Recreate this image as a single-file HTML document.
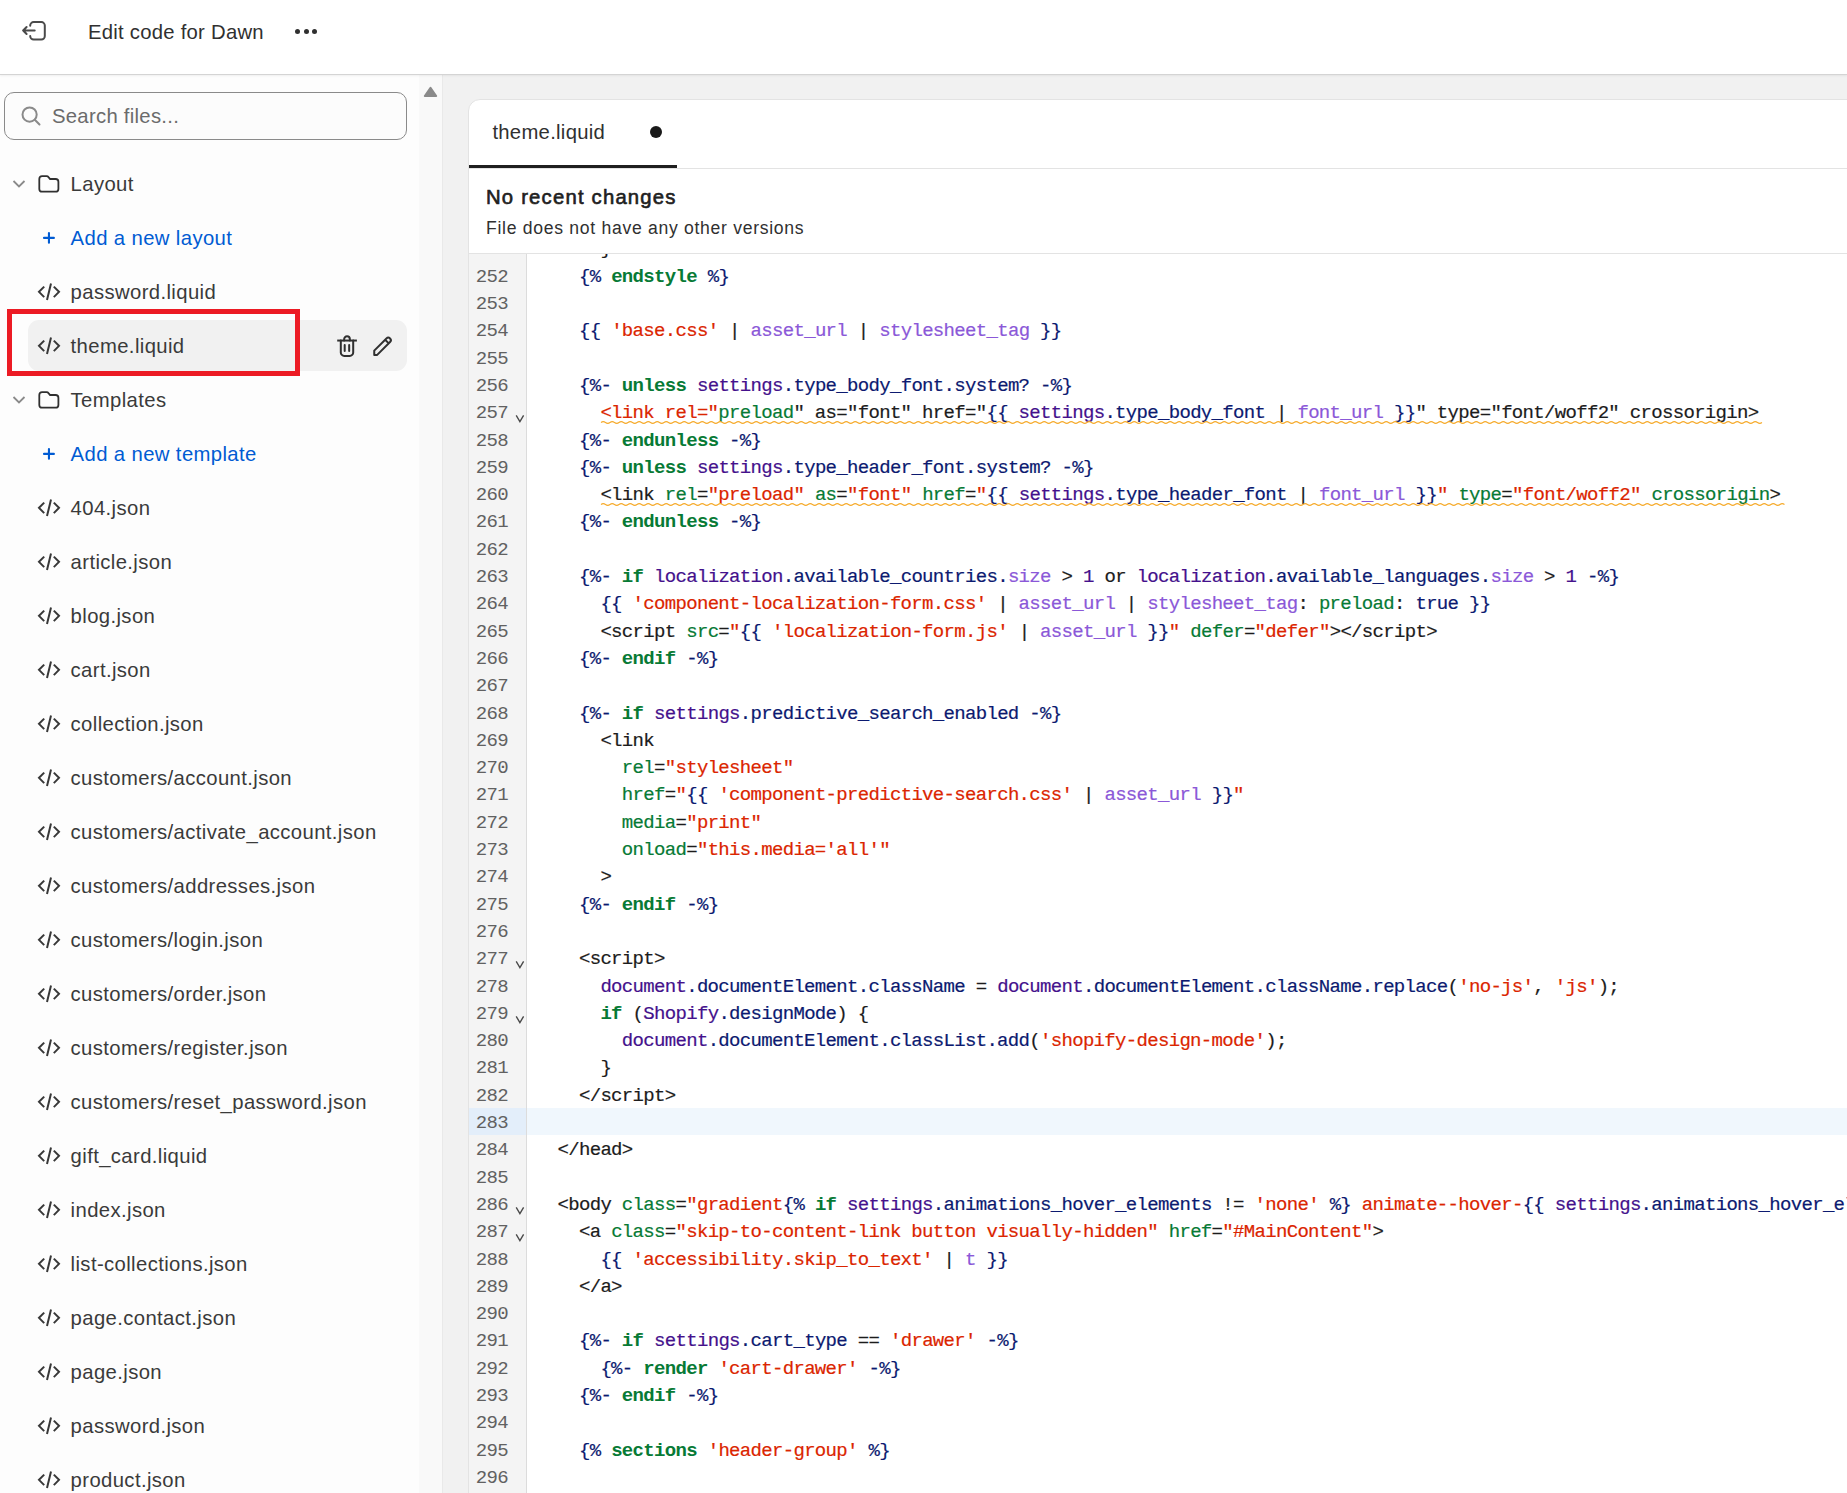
<!DOCTYPE html>
<html><head><meta charset="utf-8"><title>Edit code for Dawn</title>
<style>
*{box-sizing:border-box;margin:0;padding:0}
html,body{width:1847px;height:1493px;overflow:hidden;background:#f1f1f1;font-family:"Liberation Sans",sans-serif;color:#303030}
i,b{font-style:normal;font-weight:normal}
#header{position:absolute;left:0;top:0;width:1847px;height:75px;background:#ffffff;border-bottom:1px solid #d4d4d4;box-shadow:0 1px 2px rgba(0,0,0,.06);z-index:3}
.exit{position:absolute;left:20px;top:19px}
.title{position:absolute;left:88px;top:20px;font-size:20.3px;line-height:24px;letter-spacing:0.25px;white-space:nowrap;color:#303030}
.dots{position:absolute;left:295px;top:29.2px;width:23px;height:6px}
.dots i{position:absolute;top:0;width:5.2px;height:5.2px;border-radius:50%;background:#303030}
.dots i:nth-child(1){left:0}.dots i:nth-child(2){left:8.5px}.dots i:nth-child(3){left:17px}
#side{position:absolute;left:0;top:74px;width:419px;height:1419px;background:#fdfdfd;overflow:hidden}
.search{position:absolute;left:4px;top:18px;width:403px;height:48px;border:1px solid #8a8a8a;border-radius:10px;background:#fcfcfc}
.sicon{position:absolute;left:15px;top:11.5px}
.search span{position:absolute;left:47px;top:11px;font-size:20.3px;line-height:24px;letter-spacing:0.28px;color:#6b6b6b;white-space:nowrap}
.row{position:absolute;left:0;width:419px;height:54px}
.row .lbl{position:absolute;left:70.6px;top:0;line-height:54px;font-size:20.3px;letter-spacing:0.38px;white-space:nowrap;color:#3a3a3a}
.row .lbl.add{color:#005bd3}
.ci{position:absolute;left:37px;top:17px}
.fi{position:absolute;left:37px;top:17px}
.chev{position:absolute;left:12px;top:22px}
.plus{position:absolute;left:42px;top:20px}
.selbg{position:absolute;left:28px;top:1px;width:379px;height:51px;border-radius:11px;background:#f1f1f1}
.trash{position:absolute;left:336px;top:14.5px}
.pencil{position:absolute;left:372px;top:16px}
.redbox{position:absolute;left:7px;top:235px;width:293px;height:67px;border:5px solid #ec1b24}
#track{position:absolute;left:419px;top:74px;width:23px;height:1419px;background:#f9f9f9}
.tri{position:absolute;left:3px;top:10px}
#main{position:absolute;left:442px;top:74px;width:1405px;height:1419px;background:#f1f1f1;border-left:1px solid #e9e9e9}
#card{position:absolute;left:25px;top:25px;width:1420px;height:1450px;background:#ffffff;border:1px solid #e3e3e3;border-radius:12px 0 0 0;overflow:hidden}
.tabs{position:absolute;left:0;top:0;width:100%;height:69px;border-bottom:1px solid #e3e3e3}
.tab{position:absolute;left:0;top:0;width:208px;height:68px;border-bottom:3px solid #1f1f1f;font-size:20.3px;color:#303030}
.tab{padding-left:23.4px;line-height:24px;padding-top:20px;letter-spacing:0.28px;white-space:nowrap}
.dot{position:absolute;left:181px;top:26px;width:12px;height:12px;border-radius:50%;background:#1a1a1a}
.info{position:absolute;left:0;top:69px;width:100%;height:85px;border-bottom:1px solid #e3e3e3}
.info .h{position:absolute;left:17px;top:15.8px;letter-spacing:1.2px;font-size:20.3px;line-height:24px;font-weight:normal;-webkit-text-stroke:0.6px #202020;color:#202020;white-space:nowrap}
.info .p{position:absolute;left:17px;top:48px;font-size:17.6px;line-height:22px;letter-spacing:0.7px;color:#303030;white-space:nowrap}
.editor{position:absolute;left:0;top:154px;width:100%;height:1300px;overflow:hidden}
.gutter{position:absolute;left:0;top:0;width:58px;height:100%;background:#f4f4f4;border-right:1px solid #dcdcdc}
.gl,.cl{position:absolute;height:27.3px;line-height:27.3px;font-family:"Liberation Mono",monospace;font-size:19px;letter-spacing:-0.68px;white-space:pre;padding-top:2.1px}
.gl{left:0;width:57px;color:#616161}
.gl{padding-right:18px;text-align:right}
.gl.cur{background:#e3eefa}
.fold{position:absolute;left:46px;top:0;font-family:"Liberation Sans",sans-serif;font-size:14px;letter-spacing:0;color:#555}
.cl{left:58px;width:1400px;padding-left:30.5px;color:#1c1c1c;-webkit-text-stroke-width:0.2px}
.cl.cur{background:#f0f7fd}
.cl i.n{color:#0c1a70}
.cl i.k{color:#077a35;font-weight:bold;-webkit-text-stroke-width:0}
.cl i.v{color:#44118c}
.cl i.f{color:#8b58d8}
.cl i.s{color:#db2500}
.cl i.g{color:#077a35}
.cl i.d{color:#1c1c1c}
.fold{position:absolute;left:46px;top:16.3px}
.sq{position:absolute;top:21.6px;height:5px;overflow:visible}

</style></head>
<body>
<div id="header">
<svg class="exit" width="28" height="24" viewBox="0 0 28 24"><path d="M10.2 6.8 V6.6 A3.5 3.5 0 0 1 13.7 3.1 H21.3 A3.5 3.5 0 0 1 24.8 6.6 V17.1 A3.5 3.5 0 0 1 21.3 20.6 H13.7 A3.5 3.5 0 0 1 10.2 17.1 M14.7 11.5 H3.1 M6.6 8 L3.1 11.5 L6.6 15" fill="none" stroke="#4a4a4a" stroke-width="2" stroke-linecap="round" stroke-linejoin="round"/></svg>
<div class="title">Edit code for Dawn</div>
<div class="dots"><i></i><i></i><i></i></div>
</div>
<div id="side">
<div class="search"><svg class="sicon" width="24" height="24" viewBox="0 0 24 24"><circle cx="9.6" cy="9.6" r="7.1" fill="none" stroke="#8a8a8a" stroke-width="2"/><path d="M14.8 14.8 L19.5 19.5" stroke="#8a8a8a" stroke-width="2" stroke-linecap="round"/></svg><span>Search files...</span></div>
<div class="row" style="top:83px"><svg class="chev" width="14" height="10" viewBox="0 0 14 10"><path d="M1.5 2 L7 7.5 L12.5 2" fill="none" stroke="#8a8a8a" stroke-width="1.8"/></svg><svg class="fi" width="24" height="20" viewBox="0 0 24 20"><path d="M2.3 5 Q2.3 2.2 5.1 2.2 L9.6 2.2 Q10.8 2.2 11.5 3.1 L13.1 5 L18.6 5 Q21.4 5 21.4 7.8 L21.4 14.9 Q21.4 17.7 18.6 17.7 L5.1 17.7 Q2.3 17.7 2.3 14.9 Z" fill="none" stroke="#303030" stroke-width="1.8"/></svg><span class="lbl">Layout</span></div><div class="row" style="top:137px"><svg class="plus" width="14" height="14" viewBox="0 0 14 14"><path d="M6.95 2 V11.7 M2 6.9 H11.9" stroke="#005bd3" stroke-width="2.1" stroke-linecap="round"/></svg><span class="lbl add">Add a new layout</span></div><div class="row" style="top:191px"><svg class="ci" width="24" height="20" viewBox="0 0 24 20"><path d="M7.2 4.6 L2 9.85 L7.2 15.1 M10 18.1 L14 1.6 M16.8 4.6 L22 9.85 L16.8 15.1" fill="none" stroke="#383838" stroke-width="2"/></svg><span class="lbl">password.liquid</span></div><div class="row sel" style="top:245px"><div class="selbg"></div><svg class="ci" width="24" height="20" viewBox="0 0 24 20"><path d="M7.2 4.6 L2 9.85 L7.2 15.1 M10 18.1 L14 1.6 M16.8 4.6 L22 9.85 L16.8 15.1" fill="none" stroke="#383838" stroke-width="2"/></svg><span class="lbl">theme.liquid</span><svg class="trash" width="22" height="24" viewBox="0 0 22 24"><path d="M1.2 6.55 H20.9" stroke="#303030" stroke-width="2"/><path d="M8.15 6.5 V5.2 A2.86 2.86 0 0 1 13.87 5.2 V6.5 M4.8 6.6 V18.4 A3.5 3.5 0 0 0 8.3 21.9 H13.7 A3.5 3.5 0 0 0 17.2 18.4 V6.6 M8.7 11.05 V17 M13.17 11.05 V17" fill="none" stroke="#303030" stroke-width="2" stroke-linecap="round"/></svg><svg class="pencil" width="22" height="22" viewBox="0 0 22 22"><path d="M2.24 15.66 L14.45 3.45 A2.54 2.54 0 0 1 18.05 7.05 L5.2 19.9 L2.24 19.9 Z M13.15 4.75 L16.75 8.35" fill="none" stroke="#303030" stroke-width="2" stroke-linejoin="round"/></svg></div><div class="row" style="top:299px"><svg class="chev" width="14" height="10" viewBox="0 0 14 10"><path d="M1.5 2 L7 7.5 L12.5 2" fill="none" stroke="#8a8a8a" stroke-width="1.8"/></svg><svg class="fi" width="24" height="20" viewBox="0 0 24 20"><path d="M2.3 5 Q2.3 2.2 5.1 2.2 L9.6 2.2 Q10.8 2.2 11.5 3.1 L13.1 5 L18.6 5 Q21.4 5 21.4 7.8 L21.4 14.9 Q21.4 17.7 18.6 17.7 L5.1 17.7 Q2.3 17.7 2.3 14.9 Z" fill="none" stroke="#303030" stroke-width="1.8"/></svg><span class="lbl">Templates</span></div><div class="row" style="top:353px"><svg class="plus" width="14" height="14" viewBox="0 0 14 14"><path d="M6.95 2 V11.7 M2 6.9 H11.9" stroke="#005bd3" stroke-width="2.1" stroke-linecap="round"/></svg><span class="lbl add">Add a new template</span></div><div class="row" style="top:407px"><svg class="ci" width="24" height="20" viewBox="0 0 24 20"><path d="M7.2 4.6 L2 9.85 L7.2 15.1 M10 18.1 L14 1.6 M16.8 4.6 L22 9.85 L16.8 15.1" fill="none" stroke="#383838" stroke-width="2"/></svg><span class="lbl">404.json</span></div><div class="row" style="top:461px"><svg class="ci" width="24" height="20" viewBox="0 0 24 20"><path d="M7.2 4.6 L2 9.85 L7.2 15.1 M10 18.1 L14 1.6 M16.8 4.6 L22 9.85 L16.8 15.1" fill="none" stroke="#383838" stroke-width="2"/></svg><span class="lbl">article.json</span></div><div class="row" style="top:515px"><svg class="ci" width="24" height="20" viewBox="0 0 24 20"><path d="M7.2 4.6 L2 9.85 L7.2 15.1 M10 18.1 L14 1.6 M16.8 4.6 L22 9.85 L16.8 15.1" fill="none" stroke="#383838" stroke-width="2"/></svg><span class="lbl">blog.json</span></div><div class="row" style="top:569px"><svg class="ci" width="24" height="20" viewBox="0 0 24 20"><path d="M7.2 4.6 L2 9.85 L7.2 15.1 M10 18.1 L14 1.6 M16.8 4.6 L22 9.85 L16.8 15.1" fill="none" stroke="#383838" stroke-width="2"/></svg><span class="lbl">cart.json</span></div><div class="row" style="top:623px"><svg class="ci" width="24" height="20" viewBox="0 0 24 20"><path d="M7.2 4.6 L2 9.85 L7.2 15.1 M10 18.1 L14 1.6 M16.8 4.6 L22 9.85 L16.8 15.1" fill="none" stroke="#383838" stroke-width="2"/></svg><span class="lbl">collection.json</span></div><div class="row" style="top:677px"><svg class="ci" width="24" height="20" viewBox="0 0 24 20"><path d="M7.2 4.6 L2 9.85 L7.2 15.1 M10 18.1 L14 1.6 M16.8 4.6 L22 9.85 L16.8 15.1" fill="none" stroke="#383838" stroke-width="2"/></svg><span class="lbl">customers/account.json</span></div><div class="row" style="top:731px"><svg class="ci" width="24" height="20" viewBox="0 0 24 20"><path d="M7.2 4.6 L2 9.85 L7.2 15.1 M10 18.1 L14 1.6 M16.8 4.6 L22 9.85 L16.8 15.1" fill="none" stroke="#383838" stroke-width="2"/></svg><span class="lbl">customers/activate_account.json</span></div><div class="row" style="top:785px"><svg class="ci" width="24" height="20" viewBox="0 0 24 20"><path d="M7.2 4.6 L2 9.85 L7.2 15.1 M10 18.1 L14 1.6 M16.8 4.6 L22 9.85 L16.8 15.1" fill="none" stroke="#383838" stroke-width="2"/></svg><span class="lbl">customers/addresses.json</span></div><div class="row" style="top:839px"><svg class="ci" width="24" height="20" viewBox="0 0 24 20"><path d="M7.2 4.6 L2 9.85 L7.2 15.1 M10 18.1 L14 1.6 M16.8 4.6 L22 9.85 L16.8 15.1" fill="none" stroke="#383838" stroke-width="2"/></svg><span class="lbl">customers/login.json</span></div><div class="row" style="top:893px"><svg class="ci" width="24" height="20" viewBox="0 0 24 20"><path d="M7.2 4.6 L2 9.85 L7.2 15.1 M10 18.1 L14 1.6 M16.8 4.6 L22 9.85 L16.8 15.1" fill="none" stroke="#383838" stroke-width="2"/></svg><span class="lbl">customers/order.json</span></div><div class="row" style="top:947px"><svg class="ci" width="24" height="20" viewBox="0 0 24 20"><path d="M7.2 4.6 L2 9.85 L7.2 15.1 M10 18.1 L14 1.6 M16.8 4.6 L22 9.85 L16.8 15.1" fill="none" stroke="#383838" stroke-width="2"/></svg><span class="lbl">customers/register.json</span></div><div class="row" style="top:1001px"><svg class="ci" width="24" height="20" viewBox="0 0 24 20"><path d="M7.2 4.6 L2 9.85 L7.2 15.1 M10 18.1 L14 1.6 M16.8 4.6 L22 9.85 L16.8 15.1" fill="none" stroke="#383838" stroke-width="2"/></svg><span class="lbl">customers/reset_password.json</span></div><div class="row" style="top:1055px"><svg class="ci" width="24" height="20" viewBox="0 0 24 20"><path d="M7.2 4.6 L2 9.85 L7.2 15.1 M10 18.1 L14 1.6 M16.8 4.6 L22 9.85 L16.8 15.1" fill="none" stroke="#383838" stroke-width="2"/></svg><span class="lbl">gift_card.liquid</span></div><div class="row" style="top:1109px"><svg class="ci" width="24" height="20" viewBox="0 0 24 20"><path d="M7.2 4.6 L2 9.85 L7.2 15.1 M10 18.1 L14 1.6 M16.8 4.6 L22 9.85 L16.8 15.1" fill="none" stroke="#383838" stroke-width="2"/></svg><span class="lbl">index.json</span></div><div class="row" style="top:1163px"><svg class="ci" width="24" height="20" viewBox="0 0 24 20"><path d="M7.2 4.6 L2 9.85 L7.2 15.1 M10 18.1 L14 1.6 M16.8 4.6 L22 9.85 L16.8 15.1" fill="none" stroke="#383838" stroke-width="2"/></svg><span class="lbl">list-collections.json</span></div><div class="row" style="top:1217px"><svg class="ci" width="24" height="20" viewBox="0 0 24 20"><path d="M7.2 4.6 L2 9.85 L7.2 15.1 M10 18.1 L14 1.6 M16.8 4.6 L22 9.85 L16.8 15.1" fill="none" stroke="#383838" stroke-width="2"/></svg><span class="lbl">page.contact.json</span></div><div class="row" style="top:1271px"><svg class="ci" width="24" height="20" viewBox="0 0 24 20"><path d="M7.2 4.6 L2 9.85 L7.2 15.1 M10 18.1 L14 1.6 M16.8 4.6 L22 9.85 L16.8 15.1" fill="none" stroke="#383838" stroke-width="2"/></svg><span class="lbl">page.json</span></div><div class="row" style="top:1325px"><svg class="ci" width="24" height="20" viewBox="0 0 24 20"><path d="M7.2 4.6 L2 9.85 L7.2 15.1 M10 18.1 L14 1.6 M16.8 4.6 L22 9.85 L16.8 15.1" fill="none" stroke="#383838" stroke-width="2"/></svg><span class="lbl">password.json</span></div><div class="row" style="top:1379px"><svg class="ci" width="24" height="20" viewBox="0 0 24 20"><path d="M7.2 4.6 L2 9.85 L7.2 15.1 M10 18.1 L14 1.6 M16.8 4.6 L22 9.85 L16.8 15.1" fill="none" stroke="#383838" stroke-width="2"/></svg><span class="lbl">product.json</span></div>
<div class="redbox"></div>
</div>
<div id="track"><svg class="tri" width="18" height="14" viewBox="0 0 18 14"><path d="M2.8 12 L8.5 3.9 L14.2 12 Z" fill="#8a8a8a" stroke="#8a8a8a" stroke-width="2" stroke-linejoin="round"/></svg></div>
<div id="main">
<div id="card">
<div class="tabs"><div class="tab">theme.liquid<span class="dot"></span></div></div>
<div class="info"><div class="h">No recent changes</div><div class="p">File does not have any other versions</div></div>
<div class="editor">
<div class="gutter"><div class="gl" style="top:-19.65px"></div><div class="gl" style="top:7.65px">252</div><div class="gl" style="top:34.95px">253</div><div class="gl" style="top:62.25px">254</div><div class="gl" style="top:89.55px">255</div><div class="gl" style="top:116.85px">256</div><div class="gl" style="top:144.15px">257<svg class="fold" width="10" height="9" viewBox="0 0 10 9"><path d="M1.2 1.3 L4.9 7.6 L8.6 1.3" fill="none" stroke="#4a4a4a" stroke-width="1.35"/></svg></div><div class="gl" style="top:171.45px">258</div><div class="gl" style="top:198.75px">259</div><div class="gl" style="top:226.05px">260</div><div class="gl" style="top:253.35px">261</div><div class="gl" style="top:280.65px">262</div><div class="gl" style="top:307.95px">263</div><div class="gl" style="top:335.25px">264</div><div class="gl" style="top:362.55px">265</div><div class="gl" style="top:389.85px">266</div><div class="gl" style="top:417.15px">267</div><div class="gl" style="top:444.45px">268</div><div class="gl" style="top:471.75px">269</div><div class="gl" style="top:499.05px">270</div><div class="gl" style="top:526.35px">271</div><div class="gl" style="top:553.65px">272</div><div class="gl" style="top:580.95px">273</div><div class="gl" style="top:608.25px">274</div><div class="gl" style="top:635.55px">275</div><div class="gl" style="top:662.85px">276</div><div class="gl" style="top:690.15px">277<svg class="fold" width="10" height="9" viewBox="0 0 10 9"><path d="M1.2 1.3 L4.9 7.6 L8.6 1.3" fill="none" stroke="#4a4a4a" stroke-width="1.35"/></svg></div><div class="gl" style="top:717.45px">278</div><div class="gl" style="top:744.75px">279<svg class="fold" width="10" height="9" viewBox="0 0 10 9"><path d="M1.2 1.3 L4.9 7.6 L8.6 1.3" fill="none" stroke="#4a4a4a" stroke-width="1.35"/></svg></div><div class="gl" style="top:772.05px">280</div><div class="gl" style="top:799.35px">281</div><div class="gl" style="top:826.65px">282</div><div class="gl cur" style="top:853.95px">283</div><div class="gl" style="top:881.25px">284</div><div class="gl" style="top:908.55px">285</div><div class="gl" style="top:935.85px">286<svg class="fold" width="10" height="9" viewBox="0 0 10 9"><path d="M1.2 1.3 L4.9 7.6 L8.6 1.3" fill="none" stroke="#4a4a4a" stroke-width="1.35"/></svg></div><div class="gl" style="top:963.15px">287<svg class="fold" width="10" height="9" viewBox="0 0 10 9"><path d="M1.2 1.3 L4.9 7.6 L8.6 1.3" fill="none" stroke="#4a4a4a" stroke-width="1.35"/></svg></div><div class="gl" style="top:990.45px">288</div><div class="gl" style="top:1017.75px">289</div><div class="gl" style="top:1045.05px">290</div><div class="gl" style="top:1072.35px">291</div><div class="gl" style="top:1099.65px">292</div><div class="gl" style="top:1126.95px">293</div><div class="gl" style="top:1154.25px">294</div><div class="gl" style="top:1181.55px">295</div><div class="gl" style="top:1208.85px">296</div><div class="gl" style="top:1236.15px">297</div></div>
<div class="code"><div class="cl" style="top:-19.65px">    <i class="d">}</i></div><div class="cl" style="top:7.65px">  <i class="n">{%</i> <i class="k">endstyle</i> <i class="n">%}</i></div><div class="cl" style="top:34.95px"></div><div class="cl" style="top:62.25px">  <i class="n">{{</i> <i class="s">&#x27;base.css&#x27;</i> <i class="d">|</i> <i class="f">asset_url</i> <i class="d">|</i> <i class="f">stylesheet_tag</i> <i class="n">}}</i></div><div class="cl" style="top:89.55px"></div><div class="cl" style="top:116.85px">  <i class="n">{%-</i> <i class="k">unless</i> <i class="v">settings</i><i class="n">.type_body_font.system?</i> <i class="n">-%}</i></div><div class="cl" style="top:144.15px">    <i class="s">&lt;link rel=&quot;</i><i class="g">preload</i><i class="d">&quot; as=&quot;font&quot; href=&quot;</i><i class="n">{{</i> <i class="v">settings</i><i class="n">.type_body_font</i> <i class="d">|</i> <i class="f">font_url</i> <i class="n">}}</i><i class="d">&quot; type=&quot;font/woff2&quot; crossorigin&gt;</i><svg class="sq" style="left:74.38px;width:1157.8px" width="1157.8" height="5" viewBox="0 0 1157.8 5"><path d="M0 2.5 Q2.25 0.75 4.50 2.5 Q6.75 4.25 9.00 2.5 Q11.25 0.75 13.50 2.5 Q15.75 4.25 18.00 2.5 Q20.25 0.75 22.50 2.5 Q24.75 4.25 27.00 2.5 Q29.25 0.75 31.50 2.5 Q33.75 4.25 36.00 2.5 Q38.25 0.75 40.50 2.5 Q42.75 4.25 45.00 2.5 Q47.25 0.75 49.50 2.5 Q51.75 4.25 54.00 2.5 Q56.25 0.75 58.50 2.5 Q60.75 4.25 63.00 2.5 Q65.25 0.75 67.50 2.5 Q69.75 4.25 72.00 2.5 Q74.25 0.75 76.50 2.5 Q78.75 4.25 81.00 2.5 Q83.25 0.75 85.50 2.5 Q87.75 4.25 90.00 2.5 Q92.25 0.75 94.50 2.5 Q96.75 4.25 99.00 2.5 Q101.25 0.75 103.50 2.5 Q105.75 4.25 108.00 2.5 Q110.25 0.75 112.50 2.5 Q114.75 4.25 117.00 2.5 Q119.25 0.75 121.50 2.5 Q123.75 4.25 126.00 2.5 Q128.25 0.75 130.50 2.5 Q132.75 4.25 135.00 2.5 Q137.25 0.75 139.50 2.5 Q141.75 4.25 144.00 2.5 Q146.25 0.75 148.50 2.5 Q150.75 4.25 153.00 2.5 Q155.25 0.75 157.50 2.5 Q159.75 4.25 162.00 2.5 Q164.25 0.75 166.50 2.5 Q168.75 4.25 171.00 2.5 Q173.25 0.75 175.50 2.5 Q177.75 4.25 180.00 2.5 Q182.25 0.75 184.50 2.5 Q186.75 4.25 189.00 2.5 Q191.25 0.75 193.50 2.5 Q195.75 4.25 198.00 2.5 Q200.25 0.75 202.50 2.5 Q204.75 4.25 207.00 2.5 Q209.25 0.75 211.50 2.5 Q213.75 4.25 216.00 2.5 Q218.25 0.75 220.50 2.5 Q222.75 4.25 225.00 2.5 Q227.25 0.75 229.50 2.5 Q231.75 4.25 234.00 2.5 Q236.25 0.75 238.50 2.5 Q240.75 4.25 243.00 2.5 Q245.25 0.75 247.50 2.5 Q249.75 4.25 252.00 2.5 Q254.25 0.75 256.50 2.5 Q258.75 4.25 261.00 2.5 Q263.25 0.75 265.50 2.5 Q267.75 4.25 270.00 2.5 Q272.25 0.75 274.50 2.5 Q276.75 4.25 279.00 2.5 Q281.25 0.75 283.50 2.5 Q285.75 4.25 288.00 2.5 Q290.25 0.75 292.50 2.5 Q294.75 4.25 297.00 2.5 Q299.25 0.75 301.50 2.5 Q303.75 4.25 306.00 2.5 Q308.25 0.75 310.50 2.5 Q312.75 4.25 315.00 2.5 Q317.25 0.75 319.50 2.5 Q321.75 4.25 324.00 2.5 Q326.25 0.75 328.50 2.5 Q330.75 4.25 333.00 2.5 Q335.25 0.75 337.50 2.5 Q339.75 4.25 342.00 2.5 Q344.25 0.75 346.50 2.5 Q348.75 4.25 351.00 2.5 Q353.25 0.75 355.50 2.5 Q357.75 4.25 360.00 2.5 Q362.25 0.75 364.50 2.5 Q366.75 4.25 369.00 2.5 Q371.25 0.75 373.50 2.5 Q375.75 4.25 378.00 2.5 Q380.25 0.75 382.50 2.5 Q384.75 4.25 387.00 2.5 Q389.25 0.75 391.50 2.5 Q393.75 4.25 396.00 2.5 Q398.25 0.75 400.50 2.5 Q402.75 4.25 405.00 2.5 Q407.25 0.75 409.50 2.5 Q411.75 4.25 414.00 2.5 Q416.25 0.75 418.50 2.5 Q420.75 4.25 423.00 2.5 Q425.25 0.75 427.50 2.5 Q429.75 4.25 432.00 2.5 Q434.25 0.75 436.50 2.5 Q438.75 4.25 441.00 2.5 Q443.25 0.75 445.50 2.5 Q447.75 4.25 450.00 2.5 Q452.25 0.75 454.50 2.5 Q456.75 4.25 459.00 2.5 Q461.25 0.75 463.50 2.5 Q465.75 4.25 468.00 2.5 Q470.25 0.75 472.50 2.5 Q474.75 4.25 477.00 2.5 Q479.25 0.75 481.50 2.5 Q483.75 4.25 486.00 2.5 Q488.25 0.75 490.50 2.5 Q492.75 4.25 495.00 2.5 Q497.25 0.75 499.50 2.5 Q501.75 4.25 504.00 2.5 Q506.25 0.75 508.50 2.5 Q510.75 4.25 513.00 2.5 Q515.25 0.75 517.50 2.5 Q519.75 4.25 522.00 2.5 Q524.25 0.75 526.50 2.5 Q528.75 4.25 531.00 2.5 Q533.25 0.75 535.50 2.5 Q537.75 4.25 540.00 2.5 Q542.25 0.75 544.50 2.5 Q546.75 4.25 549.00 2.5 Q551.25 0.75 553.50 2.5 Q555.75 4.25 558.00 2.5 Q560.25 0.75 562.50 2.5 Q564.75 4.25 567.00 2.5 Q569.25 0.75 571.50 2.5 Q573.75 4.25 576.00 2.5 Q578.25 0.75 580.50 2.5 Q582.75 4.25 585.00 2.5 Q587.25 0.75 589.50 2.5 Q591.75 4.25 594.00 2.5 Q596.25 0.75 598.50 2.5 Q600.75 4.25 603.00 2.5 Q605.25 0.75 607.50 2.5 Q609.75 4.25 612.00 2.5 Q614.25 0.75 616.50 2.5 Q618.75 4.25 621.00 2.5 Q623.25 0.75 625.50 2.5 Q627.75 4.25 630.00 2.5 Q632.25 0.75 634.50 2.5 Q636.75 4.25 639.00 2.5 Q641.25 0.75 643.50 2.5 Q645.75 4.25 648.00 2.5 Q650.25 0.75 652.50 2.5 Q654.75 4.25 657.00 2.5 Q659.25 0.75 661.50 2.5 Q663.75 4.25 666.00 2.5 Q668.25 0.75 670.50 2.5 Q672.75 4.25 675.00 2.5 Q677.25 0.75 679.50 2.5 Q681.75 4.25 684.00 2.5 Q686.25 0.75 688.50 2.5 Q690.75 4.25 693.00 2.5 Q695.25 0.75 697.50 2.5 Q699.75 4.25 702.00 2.5 Q704.25 0.75 706.50 2.5 Q708.75 4.25 711.00 2.5 Q713.25 0.75 715.50 2.5 Q717.75 4.25 720.00 2.5 Q722.25 0.75 724.50 2.5 Q726.75 4.25 729.00 2.5 Q731.25 0.75 733.50 2.5 Q735.75 4.25 738.00 2.5 Q740.25 0.75 742.50 2.5 Q744.75 4.25 747.00 2.5 Q749.25 0.75 751.50 2.5 Q753.75 4.25 756.00 2.5 Q758.25 0.75 760.50 2.5 Q762.75 4.25 765.00 2.5 Q767.25 0.75 769.50 2.5 Q771.75 4.25 774.00 2.5 Q776.25 0.75 778.50 2.5 Q780.75 4.25 783.00 2.5 Q785.25 0.75 787.50 2.5 Q789.75 4.25 792.00 2.5 Q794.25 0.75 796.50 2.5 Q798.75 4.25 801.00 2.5 Q803.25 0.75 805.50 2.5 Q807.75 4.25 810.00 2.5 Q812.25 0.75 814.50 2.5 Q816.75 4.25 819.00 2.5 Q821.25 0.75 823.50 2.5 Q825.75 4.25 828.00 2.5 Q830.25 0.75 832.50 2.5 Q834.75 4.25 837.00 2.5 Q839.25 0.75 841.50 2.5 Q843.75 4.25 846.00 2.5 Q848.25 0.75 850.50 2.5 Q852.75 4.25 855.00 2.5 Q857.25 0.75 859.50 2.5 Q861.75 4.25 864.00 2.5 Q866.25 0.75 868.50 2.5 Q870.75 4.25 873.00 2.5 Q875.25 0.75 877.50 2.5 Q879.75 4.25 882.00 2.5 Q884.25 0.75 886.50 2.5 Q888.75 4.25 891.00 2.5 Q893.25 0.75 895.50 2.5 Q897.75 4.25 900.00 2.5 Q902.25 0.75 904.50 2.5 Q906.75 4.25 909.00 2.5 Q911.25 0.75 913.50 2.5 Q915.75 4.25 918.00 2.5 Q920.25 0.75 922.50 2.5 Q924.75 4.25 927.00 2.5 Q929.25 0.75 931.50 2.5 Q933.75 4.25 936.00 2.5 Q938.25 0.75 940.50 2.5 Q942.75 4.25 945.00 2.5 Q947.25 0.75 949.50 2.5 Q951.75 4.25 954.00 2.5 Q956.25 0.75 958.50 2.5 Q960.75 4.25 963.00 2.5 Q965.25 0.75 967.50 2.5 Q969.75 4.25 972.00 2.5 Q974.25 0.75 976.50 2.5 Q978.75 4.25 981.00 2.5 Q983.25 0.75 985.50 2.5 Q987.75 4.25 990.00 2.5 Q992.25 0.75 994.50 2.5 Q996.75 4.25 999.00 2.5 Q1001.25 0.75 1003.50 2.5 Q1005.75 4.25 1008.00 2.5 Q1010.25 0.75 1012.50 2.5 Q1014.75 4.25 1017.00 2.5 Q1019.25 0.75 1021.50 2.5 Q1023.75 4.25 1026.00 2.5 Q1028.25 0.75 1030.50 2.5 Q1032.75 4.25 1035.00 2.5 Q1037.25 0.75 1039.50 2.5 Q1041.75 4.25 1044.00 2.5 Q1046.25 0.75 1048.50 2.5 Q1050.75 4.25 1053.00 2.5 Q1055.25 0.75 1057.50 2.5 Q1059.75 4.25 1062.00 2.5 Q1064.25 0.75 1066.50 2.5 Q1068.75 4.25 1071.00 2.5 Q1073.25 0.75 1075.50 2.5 Q1077.75 4.25 1080.00 2.5 Q1082.25 0.75 1084.50 2.5 Q1086.75 4.25 1089.00 2.5 Q1091.25 0.75 1093.50 2.5 Q1095.75 4.25 1098.00 2.5 Q1100.25 0.75 1102.50 2.5 Q1104.75 4.25 1107.00 2.5 Q1109.25 0.75 1111.50 2.5 Q1113.75 4.25 1116.00 2.5 Q1118.25 0.75 1120.50 2.5 Q1122.75 4.25 1125.00 2.5 Q1127.25 0.75 1129.50 2.5 Q1131.75 4.25 1134.00 2.5 Q1136.25 0.75 1138.50 2.5 Q1140.75 4.25 1143.00 2.5 Q1145.25 0.75 1147.50 2.5 Q1149.75 4.25 1152.00 2.5 Q1154.25 0.75 1156.50 2.5 Q1158.75 4.25 1161.00 2.5" fill="none" stroke="#f6aa2a" stroke-width="1.05"/></svg></div><div class="cl" style="top:171.45px">  <i class="n">{%-</i> <i class="k">endunless</i> <i class="n">-%}</i></div><div class="cl" style="top:198.75px">  <i class="n">{%-</i> <i class="k">unless</i> <i class="v">settings</i><i class="n">.type_header_font.system?</i> <i class="n">-%}</i></div><div class="cl" style="top:226.05px">    <i class="d">&lt;link</i> <i class="g">rel</i><i class="d">=</i><i class="s">&quot;preload&quot;</i> <i class="g">as</i><i class="d">=</i><i class="s">&quot;font&quot;</i> <i class="g">href</i><i class="d">=</i><i class="s">&quot;</i><i class="n">{{</i> <i class="v">settings</i><i class="n">.type_header_font</i> <i class="d">|</i> <i class="f">font_url</i> <i class="n">}}</i><i class="s">&quot;</i> <i class="g">type</i><i class="d">=</i><i class="s">&quot;font/woff2&quot;</i> <i class="g">crossorigin</i><i class="d">&gt;</i><svg class="sq" style="left:74.38px;width:1179.2px" width="1179.2" height="5" viewBox="0 0 1179.2 5"><path d="M0 2.5 Q2.25 0.75 4.50 2.5 Q6.75 4.25 9.00 2.5 Q11.25 0.75 13.50 2.5 Q15.75 4.25 18.00 2.5 Q20.25 0.75 22.50 2.5 Q24.75 4.25 27.00 2.5 Q29.25 0.75 31.50 2.5 Q33.75 4.25 36.00 2.5 Q38.25 0.75 40.50 2.5 Q42.75 4.25 45.00 2.5 Q47.25 0.75 49.50 2.5 Q51.75 4.25 54.00 2.5 Q56.25 0.75 58.50 2.5 Q60.75 4.25 63.00 2.5 Q65.25 0.75 67.50 2.5 Q69.75 4.25 72.00 2.5 Q74.25 0.75 76.50 2.5 Q78.75 4.25 81.00 2.5 Q83.25 0.75 85.50 2.5 Q87.75 4.25 90.00 2.5 Q92.25 0.75 94.50 2.5 Q96.75 4.25 99.00 2.5 Q101.25 0.75 103.50 2.5 Q105.75 4.25 108.00 2.5 Q110.25 0.75 112.50 2.5 Q114.75 4.25 117.00 2.5 Q119.25 0.75 121.50 2.5 Q123.75 4.25 126.00 2.5 Q128.25 0.75 130.50 2.5 Q132.75 4.25 135.00 2.5 Q137.25 0.75 139.50 2.5 Q141.75 4.25 144.00 2.5 Q146.25 0.75 148.50 2.5 Q150.75 4.25 153.00 2.5 Q155.25 0.75 157.50 2.5 Q159.75 4.25 162.00 2.5 Q164.25 0.75 166.50 2.5 Q168.75 4.25 171.00 2.5 Q173.25 0.75 175.50 2.5 Q177.75 4.25 180.00 2.5 Q182.25 0.75 184.50 2.5 Q186.75 4.25 189.00 2.5 Q191.25 0.75 193.50 2.5 Q195.75 4.25 198.00 2.5 Q200.25 0.75 202.50 2.5 Q204.75 4.25 207.00 2.5 Q209.25 0.75 211.50 2.5 Q213.75 4.25 216.00 2.5 Q218.25 0.75 220.50 2.5 Q222.75 4.25 225.00 2.5 Q227.25 0.75 229.50 2.5 Q231.75 4.25 234.00 2.5 Q236.25 0.75 238.50 2.5 Q240.75 4.25 243.00 2.5 Q245.25 0.75 247.50 2.5 Q249.75 4.25 252.00 2.5 Q254.25 0.75 256.50 2.5 Q258.75 4.25 261.00 2.5 Q263.25 0.75 265.50 2.5 Q267.75 4.25 270.00 2.5 Q272.25 0.75 274.50 2.5 Q276.75 4.25 279.00 2.5 Q281.25 0.75 283.50 2.5 Q285.75 4.25 288.00 2.5 Q290.25 0.75 292.50 2.5 Q294.75 4.25 297.00 2.5 Q299.25 0.75 301.50 2.5 Q303.75 4.25 306.00 2.5 Q308.25 0.75 310.50 2.5 Q312.75 4.25 315.00 2.5 Q317.25 0.75 319.50 2.5 Q321.75 4.25 324.00 2.5 Q326.25 0.75 328.50 2.5 Q330.75 4.25 333.00 2.5 Q335.25 0.75 337.50 2.5 Q339.75 4.25 342.00 2.5 Q344.25 0.75 346.50 2.5 Q348.75 4.25 351.00 2.5 Q353.25 0.75 355.50 2.5 Q357.75 4.25 360.00 2.5 Q362.25 0.75 364.50 2.5 Q366.75 4.25 369.00 2.5 Q371.25 0.75 373.50 2.5 Q375.75 4.25 378.00 2.5 Q380.25 0.75 382.50 2.5 Q384.75 4.25 387.00 2.5 Q389.25 0.75 391.50 2.5 Q393.75 4.25 396.00 2.5 Q398.25 0.75 400.50 2.5 Q402.75 4.25 405.00 2.5 Q407.25 0.75 409.50 2.5 Q411.75 4.25 414.00 2.5 Q416.25 0.75 418.50 2.5 Q420.75 4.25 423.00 2.5 Q425.25 0.75 427.50 2.5 Q429.75 4.25 432.00 2.5 Q434.25 0.75 436.50 2.5 Q438.75 4.25 441.00 2.5 Q443.25 0.75 445.50 2.5 Q447.75 4.25 450.00 2.5 Q452.25 0.75 454.50 2.5 Q456.75 4.25 459.00 2.5 Q461.25 0.75 463.50 2.5 Q465.75 4.25 468.00 2.5 Q470.25 0.75 472.50 2.5 Q474.75 4.25 477.00 2.5 Q479.25 0.75 481.50 2.5 Q483.75 4.25 486.00 2.5 Q488.25 0.75 490.50 2.5 Q492.75 4.25 495.00 2.5 Q497.25 0.75 499.50 2.5 Q501.75 4.25 504.00 2.5 Q506.25 0.75 508.50 2.5 Q510.75 4.25 513.00 2.5 Q515.25 0.75 517.50 2.5 Q519.75 4.25 522.00 2.5 Q524.25 0.75 526.50 2.5 Q528.75 4.25 531.00 2.5 Q533.25 0.75 535.50 2.5 Q537.75 4.25 540.00 2.5 Q542.25 0.75 544.50 2.5 Q546.75 4.25 549.00 2.5 Q551.25 0.75 553.50 2.5 Q555.75 4.25 558.00 2.5 Q560.25 0.75 562.50 2.5 Q564.75 4.25 567.00 2.5 Q569.25 0.75 571.50 2.5 Q573.75 4.25 576.00 2.5 Q578.25 0.75 580.50 2.5 Q582.75 4.25 585.00 2.5 Q587.25 0.75 589.50 2.5 Q591.75 4.25 594.00 2.5 Q596.25 0.75 598.50 2.5 Q600.75 4.25 603.00 2.5 Q605.25 0.75 607.50 2.5 Q609.75 4.25 612.00 2.5 Q614.25 0.75 616.50 2.5 Q618.75 4.25 621.00 2.5 Q623.25 0.75 625.50 2.5 Q627.75 4.25 630.00 2.5 Q632.25 0.75 634.50 2.5 Q636.75 4.25 639.00 2.5 Q641.25 0.75 643.50 2.5 Q645.75 4.25 648.00 2.5 Q650.25 0.75 652.50 2.5 Q654.75 4.25 657.00 2.5 Q659.25 0.75 661.50 2.5 Q663.75 4.25 666.00 2.5 Q668.25 0.75 670.50 2.5 Q672.75 4.25 675.00 2.5 Q677.25 0.75 679.50 2.5 Q681.75 4.25 684.00 2.5 Q686.25 0.75 688.50 2.5 Q690.75 4.25 693.00 2.5 Q695.25 0.75 697.50 2.5 Q699.75 4.25 702.00 2.5 Q704.25 0.75 706.50 2.5 Q708.75 4.25 711.00 2.5 Q713.25 0.75 715.50 2.5 Q717.75 4.25 720.00 2.5 Q722.25 0.75 724.50 2.5 Q726.75 4.25 729.00 2.5 Q731.25 0.75 733.50 2.5 Q735.75 4.25 738.00 2.5 Q740.25 0.75 742.50 2.5 Q744.75 4.25 747.00 2.5 Q749.25 0.75 751.50 2.5 Q753.75 4.25 756.00 2.5 Q758.25 0.75 760.50 2.5 Q762.75 4.25 765.00 2.5 Q767.25 0.75 769.50 2.5 Q771.75 4.25 774.00 2.5 Q776.25 0.75 778.50 2.5 Q780.75 4.25 783.00 2.5 Q785.25 0.75 787.50 2.5 Q789.75 4.25 792.00 2.5 Q794.25 0.75 796.50 2.5 Q798.75 4.25 801.00 2.5 Q803.25 0.75 805.50 2.5 Q807.75 4.25 810.00 2.5 Q812.25 0.75 814.50 2.5 Q816.75 4.25 819.00 2.5 Q821.25 0.75 823.50 2.5 Q825.75 4.25 828.00 2.5 Q830.25 0.75 832.50 2.5 Q834.75 4.25 837.00 2.5 Q839.25 0.75 841.50 2.5 Q843.75 4.25 846.00 2.5 Q848.25 0.75 850.50 2.5 Q852.75 4.25 855.00 2.5 Q857.25 0.75 859.50 2.5 Q861.75 4.25 864.00 2.5 Q866.25 0.75 868.50 2.5 Q870.75 4.25 873.00 2.5 Q875.25 0.75 877.50 2.5 Q879.75 4.25 882.00 2.5 Q884.25 0.75 886.50 2.5 Q888.75 4.25 891.00 2.5 Q893.25 0.75 895.50 2.5 Q897.75 4.25 900.00 2.5 Q902.25 0.75 904.50 2.5 Q906.75 4.25 909.00 2.5 Q911.25 0.75 913.50 2.5 Q915.75 4.25 918.00 2.5 Q920.25 0.75 922.50 2.5 Q924.75 4.25 927.00 2.5 Q929.25 0.75 931.50 2.5 Q933.75 4.25 936.00 2.5 Q938.25 0.75 940.50 2.5 Q942.75 4.25 945.00 2.5 Q947.25 0.75 949.50 2.5 Q951.75 4.25 954.00 2.5 Q956.25 0.75 958.50 2.5 Q960.75 4.25 963.00 2.5 Q965.25 0.75 967.50 2.5 Q969.75 4.25 972.00 2.5 Q974.25 0.75 976.50 2.5 Q978.75 4.25 981.00 2.5 Q983.25 0.75 985.50 2.5 Q987.75 4.25 990.00 2.5 Q992.25 0.75 994.50 2.5 Q996.75 4.25 999.00 2.5 Q1001.25 0.75 1003.50 2.5 Q1005.75 4.25 1008.00 2.5 Q1010.25 0.75 1012.50 2.5 Q1014.75 4.25 1017.00 2.5 Q1019.25 0.75 1021.50 2.5 Q1023.75 4.25 1026.00 2.5 Q1028.25 0.75 1030.50 2.5 Q1032.75 4.25 1035.00 2.5 Q1037.25 0.75 1039.50 2.5 Q1041.75 4.25 1044.00 2.5 Q1046.25 0.75 1048.50 2.5 Q1050.75 4.25 1053.00 2.5 Q1055.25 0.75 1057.50 2.5 Q1059.75 4.25 1062.00 2.5 Q1064.25 0.75 1066.50 2.5 Q1068.75 4.25 1071.00 2.5 Q1073.25 0.75 1075.50 2.5 Q1077.75 4.25 1080.00 2.5 Q1082.25 0.75 1084.50 2.5 Q1086.75 4.25 1089.00 2.5 Q1091.25 0.75 1093.50 2.5 Q1095.75 4.25 1098.00 2.5 Q1100.25 0.75 1102.50 2.5 Q1104.75 4.25 1107.00 2.5 Q1109.25 0.75 1111.50 2.5 Q1113.75 4.25 1116.00 2.5 Q1118.25 0.75 1120.50 2.5 Q1122.75 4.25 1125.00 2.5 Q1127.25 0.75 1129.50 2.5 Q1131.75 4.25 1134.00 2.5 Q1136.25 0.75 1138.50 2.5 Q1140.75 4.25 1143.00 2.5 Q1145.25 0.75 1147.50 2.5 Q1149.75 4.25 1152.00 2.5 Q1154.25 0.75 1156.50 2.5 Q1158.75 4.25 1161.00 2.5 Q1163.25 0.75 1165.50 2.5 Q1167.75 4.25 1170.00 2.5 Q1172.25 0.75 1174.50 2.5 Q1176.75 4.25 1179.00 2.5 Q1181.25 0.75 1183.50 2.5" fill="none" stroke="#f6aa2a" stroke-width="1.05"/></svg></div><div class="cl" style="top:253.35px">  <i class="n">{%-</i> <i class="k">endunless</i> <i class="n">-%}</i></div><div class="cl" style="top:280.65px"></div><div class="cl" style="top:307.95px">  <i class="n">{%-</i> <i class="k">if</i> <i class="v">localization</i><i class="n">.available_countries.</i><i class="f">size</i> <i class="d">&gt;</i> <i class="v">1</i> <i class="d">or</i> <i class="v">localization</i><i class="n">.available_languages.</i><i class="f">size</i> <i class="d">&gt;</i> <i class="v">1</i> <i class="n">-%}</i></div><div class="cl" style="top:335.25px">    <i class="n">{{</i> <i class="s">&#x27;component-localization-form.css&#x27;</i> <i class="d">|</i> <i class="f">asset_url</i> <i class="d">|</i> <i class="f">stylesheet_tag</i><i class="d">:</i> <i class="g">preload</i><i class="d">:</i> <i class="n">true</i> <i class="n">}}</i></div><div class="cl" style="top:362.55px">    <i class="d">&lt;script</i> <i class="g">src</i><i class="d">=</i><i class="s">&quot;</i><i class="n">{{</i> <i class="s">&#x27;localization-form.js&#x27;</i> <i class="d">|</i> <i class="f">asset_url</i> <i class="n">}}</i><i class="s">&quot;</i> <i class="g">defer</i><i class="d">=</i><i class="s">&quot;defer&quot;</i><i class="d">&gt;&lt;/script&gt;</i></div><div class="cl" style="top:389.85px">  <i class="n">{%-</i> <i class="k">endif</i> <i class="n">-%}</i></div><div class="cl" style="top:417.15px"></div><div class="cl" style="top:444.45px">  <i class="n">{%-</i> <i class="k">if</i> <i class="v">settings</i><i class="n">.predictive_search_enabled</i> <i class="n">-%}</i></div><div class="cl" style="top:471.75px">    <i class="d">&lt;link</i></div><div class="cl" style="top:499.05px">      <i class="g">rel</i><i class="d">=</i><i class="s">&quot;stylesheet&quot;</i></div><div class="cl" style="top:526.35px">      <i class="g">href</i><i class="d">=</i><i class="s">&quot;</i><i class="n">{{</i> <i class="s">&#x27;component-predictive-search.css&#x27;</i> <i class="d">|</i> <i class="f">asset_url</i> <i class="n">}}</i><i class="s">&quot;</i></div><div class="cl" style="top:553.65px">      <i class="g">media</i><i class="d">=</i><i class="s">&quot;print&quot;</i></div><div class="cl" style="top:580.95px">      <i class="g">onload</i><i class="d">=</i><i class="s">&quot;this.media=&#x27;all&#x27;&quot;</i></div><div class="cl" style="top:608.25px">    <i class="d">&gt;</i></div><div class="cl" style="top:635.55px">  <i class="n">{%-</i> <i class="k">endif</i> <i class="n">-%}</i></div><div class="cl" style="top:662.85px"></div><div class="cl" style="top:690.15px">  <i class="d">&lt;script&gt;</i></div><div class="cl" style="top:717.45px">    <i class="v">document</i><i class="n">.documentElement.className</i> <i class="d">=</i> <i class="v">document</i><i class="n">.documentElement.className.replace</i><i class="d">(</i><i class="s">&#x27;no-js&#x27;</i><i class="d">,</i> <i class="s">&#x27;js&#x27;</i><i class="d">);</i></div><div class="cl" style="top:744.75px">    <i class="k">if</i> <i class="d">(</i><i class="v">Shopify</i><i class="n">.designMode</i><i class="d">)</i> <i class="d">{</i></div><div class="cl" style="top:772.05px">      <i class="v">document</i><i class="n">.documentElement.classList.add</i><i class="d">(</i><i class="s">&#x27;shopify-design-mode&#x27;</i><i class="d">);</i></div><div class="cl" style="top:799.35px">    <i class="d">}</i></div><div class="cl" style="top:826.65px">  <i class="d">&lt;/script&gt;</i></div><div class="cl cur" style="top:853.95px"></div><div class="cl" style="top:881.25px"><i class="d">&lt;/head&gt;</i></div><div class="cl" style="top:908.55px"></div><div class="cl" style="top:935.85px"><i class="d">&lt;body</i> <i class="g">class</i><i class="d">=</i><i class="s">&quot;gradient</i><i class="n">{%</i> <i class="k">if</i> <i class="v">settings</i><i class="n">.animations_hover_elements</i> <i class="d">!=</i> <i class="s">&#x27;none&#x27;</i> <i class="n">%}</i> <i class="s">animate--hover-</i><i class="n">{{</i> <i class="v">settings</i><i class="n">.animations_hover_elements</i> <i class="n">}}</i><i class="s">&quot;</i></div><div class="cl" style="top:963.15px">  <i class="d">&lt;a</i> <i class="g">class</i><i class="d">=</i><i class="s">&quot;skip-to-content-link button visually-hidden&quot;</i> <i class="g">href</i><i class="d">=</i><i class="s">&quot;#MainContent&quot;</i><i class="d">&gt;</i></div><div class="cl" style="top:990.45px">    <i class="n">{{</i> <i class="s">&#x27;accessibility.skip_to_text&#x27;</i> <i class="d">|</i> <i class="f">t</i> <i class="n">}}</i></div><div class="cl" style="top:1017.75px">  <i class="d">&lt;/a&gt;</i></div><div class="cl" style="top:1045.05px"></div><div class="cl" style="top:1072.35px">  <i class="n">{%-</i> <i class="k">if</i> <i class="v">settings</i><i class="n">.cart_type</i> <i class="d">==</i> <i class="s">&#x27;drawer&#x27;</i> <i class="n">-%}</i></div><div class="cl" style="top:1099.65px">    <i class="n">{%-</i> <i class="k">render</i> <i class="s">&#x27;cart-drawer&#x27;</i> <i class="n">-%}</i></div><div class="cl" style="top:1126.95px">  <i class="n">{%-</i> <i class="k">endif</i> <i class="n">-%}</i></div><div class="cl" style="top:1154.25px"></div><div class="cl" style="top:1181.55px">  <i class="n">{%</i> <i class="k">sections</i> <i class="s">&#x27;header-group&#x27;</i> <i class="n">%}</i></div><div class="cl" style="top:1208.85px"></div><div class="cl" style="top:1236.15px"></div></div>
</div>
</div>
</div>
</body></html>
